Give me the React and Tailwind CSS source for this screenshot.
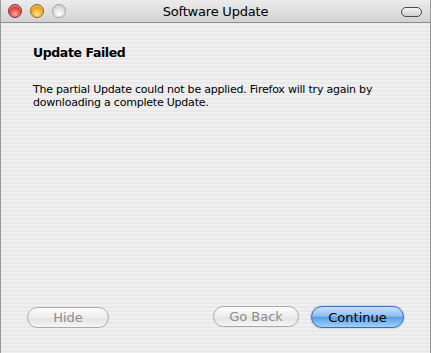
export default function App() {
  return (
    <div className="w-[431px] h-[353px] flex flex-col overflow-hidden font-['Liberation_Sans',Arial,sans-serif] border-x border-[#9a9a9a] bg-[#ececec] bg-[repeating-linear-gradient(to_bottom,#f0f0f0_0px,#f0f0f0_2px,#e9e9e9_2px,#e9e9e9_4px)]">
      {/* Title bar */}
      <div className="relative h-[23px] shrink-0 flex items-center justify-center bg-[linear-gradient(to_bottom,#ececec,#d2d2d2)] border-b border-[#8e8e8e] rounded-t-[5px]">
        <div className="absolute left-[7px] top-[4px] flex gap-[8px]">
          <span className="w-[14px] h-[14px] rounded-full border border-[#8c2a2a] bg-[radial-gradient(circle_at_50%_75%,#ffb0a8_0%,#e2524a_45%,#b5261f_100%)] shadow-[inset_0_1px_1px_rgba(255,255,255,0.6)]" />
          <span className="w-[14px] h-[14px] rounded-full border border-[#9a6410] bg-[radial-gradient(circle_at_50%_75%,#ffe89a_0%,#f4b12a_45%,#c97a08_100%)] shadow-[inset_0_1px_1px_rgba(255,255,255,0.6)]" />
          <span className="w-[14px] h-[14px] rounded-full border border-[#a2a2a2] bg-[radial-gradient(circle_at_50%_75%,#ffffff_0%,#e2e2e2_50%,#c4c4c4_100%)]" />
        </div>
        <span className="text-[13px] text-black leading-none font-['DejaVu_Sans',sans-serif] tracking-[-0.2px]">Software Update</span>
        <span className="absolute right-[8px] top-[7px] w-[21px] h-[10px] rounded-full border border-[#4a4a4a] bg-[linear-gradient(to_bottom,#f4f4f4,#cfcfcf)]" />
      </div>

      {/* Content */}
      <div className="flex-1 flex flex-col px-[32px] pt-[22px]">
        <h1 className="text-[12.5px] font-bold text-black leading-[16px] font-['DejaVu_Sans',sans-serif] tracking-[-0.4px]">Update Failed</h1>
        <p className="mt-[22px] text-[11px] leading-[13px] text-black font-['DejaVu_Sans',sans-serif] tracking-[-0.22px]">
          The partial Update could not be applied. Firefox will try again by
          <br />
          downloading a complete Update.
        </p>
      </div>

      {/* Buttons */}
      <div className="flex items-center justify-between px-[26px] pb-[25px] font-['DejaVu_Sans',sans-serif]">
        <button className="w-[82px] h-[21px] rounded-full border border-[#a8a8a8] bg-[linear-gradient(to_bottom,#fdfdfd,#ededed_50%,#e2e2e2_51%,#f6f6f6)] text-[13px] text-[#8d8d8d] leading-none">
          Hide
        </button>
        <div className="flex gap-[12px]">
          <button className="w-[86px] h-[21px] rounded-full border border-[#a8a8a8] bg-[linear-gradient(to_bottom,#fdfdfd,#ededed_50%,#e2e2e2_51%,#f6f6f6)] text-[13px] text-[#8d8d8d] leading-none">
            Go Back
          </button>
          <button className="w-[93px] h-[22px] rounded-full border border-[#3d6eb4] bg-[linear-gradient(to_bottom,#c6e2fb,#8cc0f0_45%,#5a9fe6_52%,#9dd2fb)] shadow-[0_0_2px_rgba(60,110,180,0.6)] text-[13px] text-black leading-none">
            Continue
          </button>
        </div>
      </div>
    </div>
  );
}
